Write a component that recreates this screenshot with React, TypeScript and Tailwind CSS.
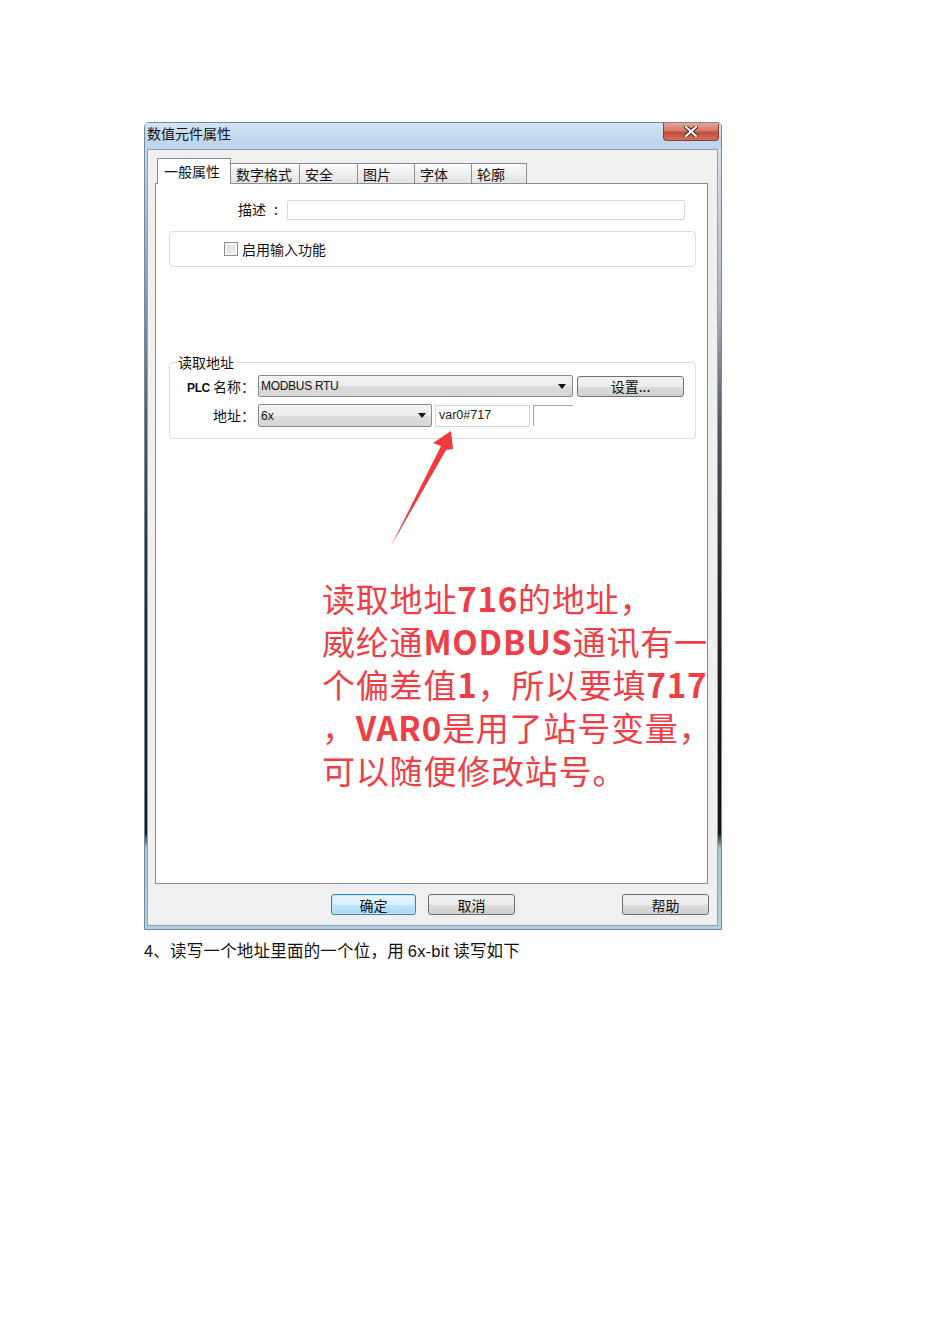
const CJK = "font-['Noto_Sans_CJK_SC','Noto_Sans',sans-serif]";
const LATIN = "font-['Liberation_Sans','Noto_Sans_CJK_SC',sans-serif]";

const TABS = [
  { label: "数字格式", w: "w-[69px]" },
  { label: "安全", w: "w-[58px]" },
  { label: "图片", w: "w-[57px]" },
  { label: "字体", w: "w-[57px]" },
  { label: "轮廓", w: "w-[55px]" },
];

function Caret() {
  return (
    <svg width="8" height="5" viewBox="0 0 8 5" className="shrink-0">
      <path d="M0 0 H8 L4 5 Z" fill="#111" />
    </svg>
  );
}

function WinButton({ label, w, focused }: { label: string; w: string; focused?: boolean }) {
  return (
    <div
      className={`${w} h-[21px] flex items-center justify-center rounded-[3px] border text-[14px] leading-none text-[#111] ${CJK} ${
        focused
          ? "border-[#3c7fb1] bg-[linear-gradient(to_bottom,#eaf6fd_0%,#d9f0fc_50%,#bee6fd_51%,#a7d9f5_100%)] shadow-[inset_0_0_0_1px_#c7e7f8]"
          : "border-[#707070] bg-[linear-gradient(to_bottom,#f2f2f2_0%,#ebebeb_50%,#dddddd_51%,#cfcfcf_100%)]"
      }`}
    >
      {label}
    </div>
  );
}

function CloseButton() {
  return (
    <div className="absolute right-[2px] top-0 w-[56px] h-[18px] rounded-b-[4px] border border-t-0 border-[#8a3c31] bg-[linear-gradient(to_bottom,#e8a593_0%,#d67a66_45%,#c24e3d_55%,#d0705c_100%)] flex items-center justify-center">
      <svg width="14" height="11" viewBox="0 0 14 11">
        <path d="M2 1 L12 10 M12 1 L2 10" stroke="#3a2420" strokeWidth="4" strokeLinecap="square" />
        <path d="M2 1 L12 10 M12 1 L2 10" stroke="#ffffff" strokeWidth="2.2" strokeLinecap="square" />
      </svg>
    </div>
  );
}

// red note drawn over the dialog
function Annotation() {
  const bold = "font-bold font-['Noto_Sans_CJK_SC',sans-serif]";
  return (
    <>
      <svg className="absolute left-0 top-0 pointer-events-none" width="578" height="808">
        <polygon
          points="306,308 288,320 296,323 246,423 301,327 308,326"
          fill="#f2393c"
        />
      </svg>
      <div
        className={`absolute left-[177px] top-[454px] flex flex-col text-[33px] leading-[43px] tracking-[0.8px] text-[#ef3e45] whitespace-nowrap ${CJK}`}
      >
        <div className="h-[43px]">
          读取地址<span className={bold}>716</span>的地址，
        </div>
        <div className="h-[43px]">
          威纶通<span className={bold}>MODBUS</span>通讯有一
        </div>
        <div className="h-[43px]">
          个偏差值<span className={bold}>1</span>，所以要填<span className={bold}>717</span>
        </div>
        <div className="h-[43px]">
          ，<span className={bold}>VAR0</span>是用了站号变量，
        </div>
        <div className="h-[43px]">可以随便修改站号。</div>
      </div>
    </>
  );
}

function Dialog() {
  return (
    <div className="relative w-[578px] h-[808px] flex flex-col border border-[#6f8aa5] rounded-t-[5px] overflow-hidden">
      <div className="relative h-[26px] shrink-0 bg-[linear-gradient(to_bottom,#d3e4f5_0%,#c4d9ef_50%,#bcd3eb_100%)]">
        <div className={`pl-[2px] pt-[1px] text-[14px] leading-[18px] text-[#111] ${CJK}`}>数值元件属性</div>
        <CloseButton />
      </div>

      <div className="flex flex-1 min-h-0">
        <div className="w-[2px] shrink-0 bg-[linear-gradient(to_bottom,#c6d7e6_0%,#9aa6b3_15%,#5a5a60_35%,#3a2f34_50%,#222_70%,#1a1a1a_88%,#a8c6d3_90%,#b5d0dd_100%)]" />
        <div className="flex-1 flex flex-col border border-[#8da2b6] bg-[#f0f0f0] pt-[8px] pl-[7px]">
          <div className="flex items-end h-[26px] pl-[2px]">
            <div className={`relative z-10 w-[74px] h-[26px] bg-white border border-b-0 border-[#898c95] flex items-center pl-[6px] text-[14px] text-[#111] ${CJK}`}>
              一般属性
            </div>
            {TABS.map((t) => (
              <div
                key={t.label}
                className={`${t.w} h-[21px] border border-l-0 border-b-0 border-[#898c95] bg-[linear-gradient(to_bottom,#fdfdfd_0%,#ededed_50%,#e3e3e3_100%)] flex items-center pl-[5px] text-[14px] text-[#111] ${CJK}`}
              >
                {t.label}
              </div>
            ))}
          </div>

          <div className="-mt-px w-[553px] h-[701px] border border-[#898c95] bg-white flex flex-col">
            <div className={`flex items-center mt-[15px] text-[14px] text-[#111] ${CJK}`}>
              <span className="pl-[82px]">描述</span>
              <span className="ml-[8px] w-[10px]">:</span>
              <div className="ml-[3px] w-[398px] h-[20px] rounded-[2px] border border-[#d5dbe3] bg-white" />
            </div>

            <div className="mt-[11px] ml-[13px] w-[527px] h-[36px] rounded-[4px] border border-[#dcdcdc] flex items-center pl-[54px]">
              <div className="w-[14px] h-[14px] border border-[#8e8f8f] bg-[linear-gradient(135deg,#d8d8d8,#f6f6f6)] shadow-[inset_0_0_0_2px_#f4f4f4]" />
              <span className={`ml-[4px] text-[14px] text-[#111] ${CJK}`}>启用输入功能</span>
            </div>

            <div className="relative mt-[95px] ml-[13px] w-[527px] h-[77px] rounded-[4px] border border-[#dcdcdc] flex flex-col pt-[12px]">
              <span className={`absolute -top-[10px] left-[8px] bg-white pr-[2px] text-[14px] leading-[18px] text-[#111] ${CJK}`}>
                读取地址
              </span>
              <div className="flex items-center">
                <span className={`w-[85px] text-right text-[14px] text-[#111] ${CJK}`}>
                  <span className={`${LATIN} text-[12px] font-bold tracking-[-0.4px]`}>PLC</span> 名称：
                </span>
                <div className="ml-[3px] w-[315px] h-[22px] rounded-[2px] border border-[#8a8a8a] bg-[linear-gradient(to_bottom,#f4f4f4_0%,#ebebeb_50%,#dddddd_51%,#d6d6d6_100%)] flex items-center justify-between pl-[2px] pr-[6px]">
                  <span className={`text-[12px] tracking-[-0.3px] text-[#111] ${LATIN}`}>MODBUS RTU</span>
                  <Caret />
                </div>
                <div className="ml-[4px]">
                  <WinButton label="设置..." w="w-[107px]" />
                </div>
              </div>
              <div className="flex items-center mt-[7px]">
                <span className={`w-[85px] text-right text-[14px] text-[#111] ${CJK}`}>地址：</span>
                <div className="ml-[3px] w-[174px] h-[23px] rounded-[2px] border border-[#8a8a8a] bg-[linear-gradient(to_bottom,#f4f4f4_0%,#ebebeb_50%,#dddddd_51%,#d6d6d6_100%)] flex items-center justify-between pl-[2px] pr-[5px]">
                  <span className={`text-[12px] text-[#111] ${LATIN}`}>6x</span>
                  <Caret />
                </div>
                <div className={`ml-[3px] w-[95px] h-[22px] border border-[#ccd6e0] bg-white flex items-center pl-[3px] text-[12.5px] text-[#222] ${LATIN}`}>
                  var0#717
                </div>
                <div className="ml-[3px] w-[40px] h-[21px] border-l border-t border-[#a8a8a8]" />
              </div>
            </div>
          </div>

          <div className="flex mt-[10px]">
            <div className="ml-[176px]">
              <WinButton label="确定" w="w-[85px]" focused />
            </div>
            <div className="ml-[12px]">
              <WinButton label="取消" w="w-[87px]" />
            </div>
            <div className="ml-[107px]">
              <WinButton label="帮助" w="w-[87px]" />
            </div>
          </div>
        </div>
        <div className="w-[3px] shrink-0 bg-[linear-gradient(to_bottom,#d3e2ee_0%,#aab8c4_20%,#555a60_35%,#2a2a2e_55%,#111_80%,#151515_88%,#a8c6d3_90%,#b5d0dd_100%)]" />
      </div>
      <div className="h-[3px] shrink-0 bg-[#b4cedd]" />

      <Annotation />
    </div>
  );
}

export default function App() {
  return (
    <div className="min-h-[1344px] bg-white pl-[144px] pt-[122px]">
      <Dialog />
      <p className={`mt-[9px] text-[16.5px] leading-[22px] tracking-[0.2px] text-[#111] ${CJK}`}>
        4、读写一个地址里面的一个位，用 <span className={LATIN}>6x-bit</span> 读写如下
      </p>
    </div>
  );
}
